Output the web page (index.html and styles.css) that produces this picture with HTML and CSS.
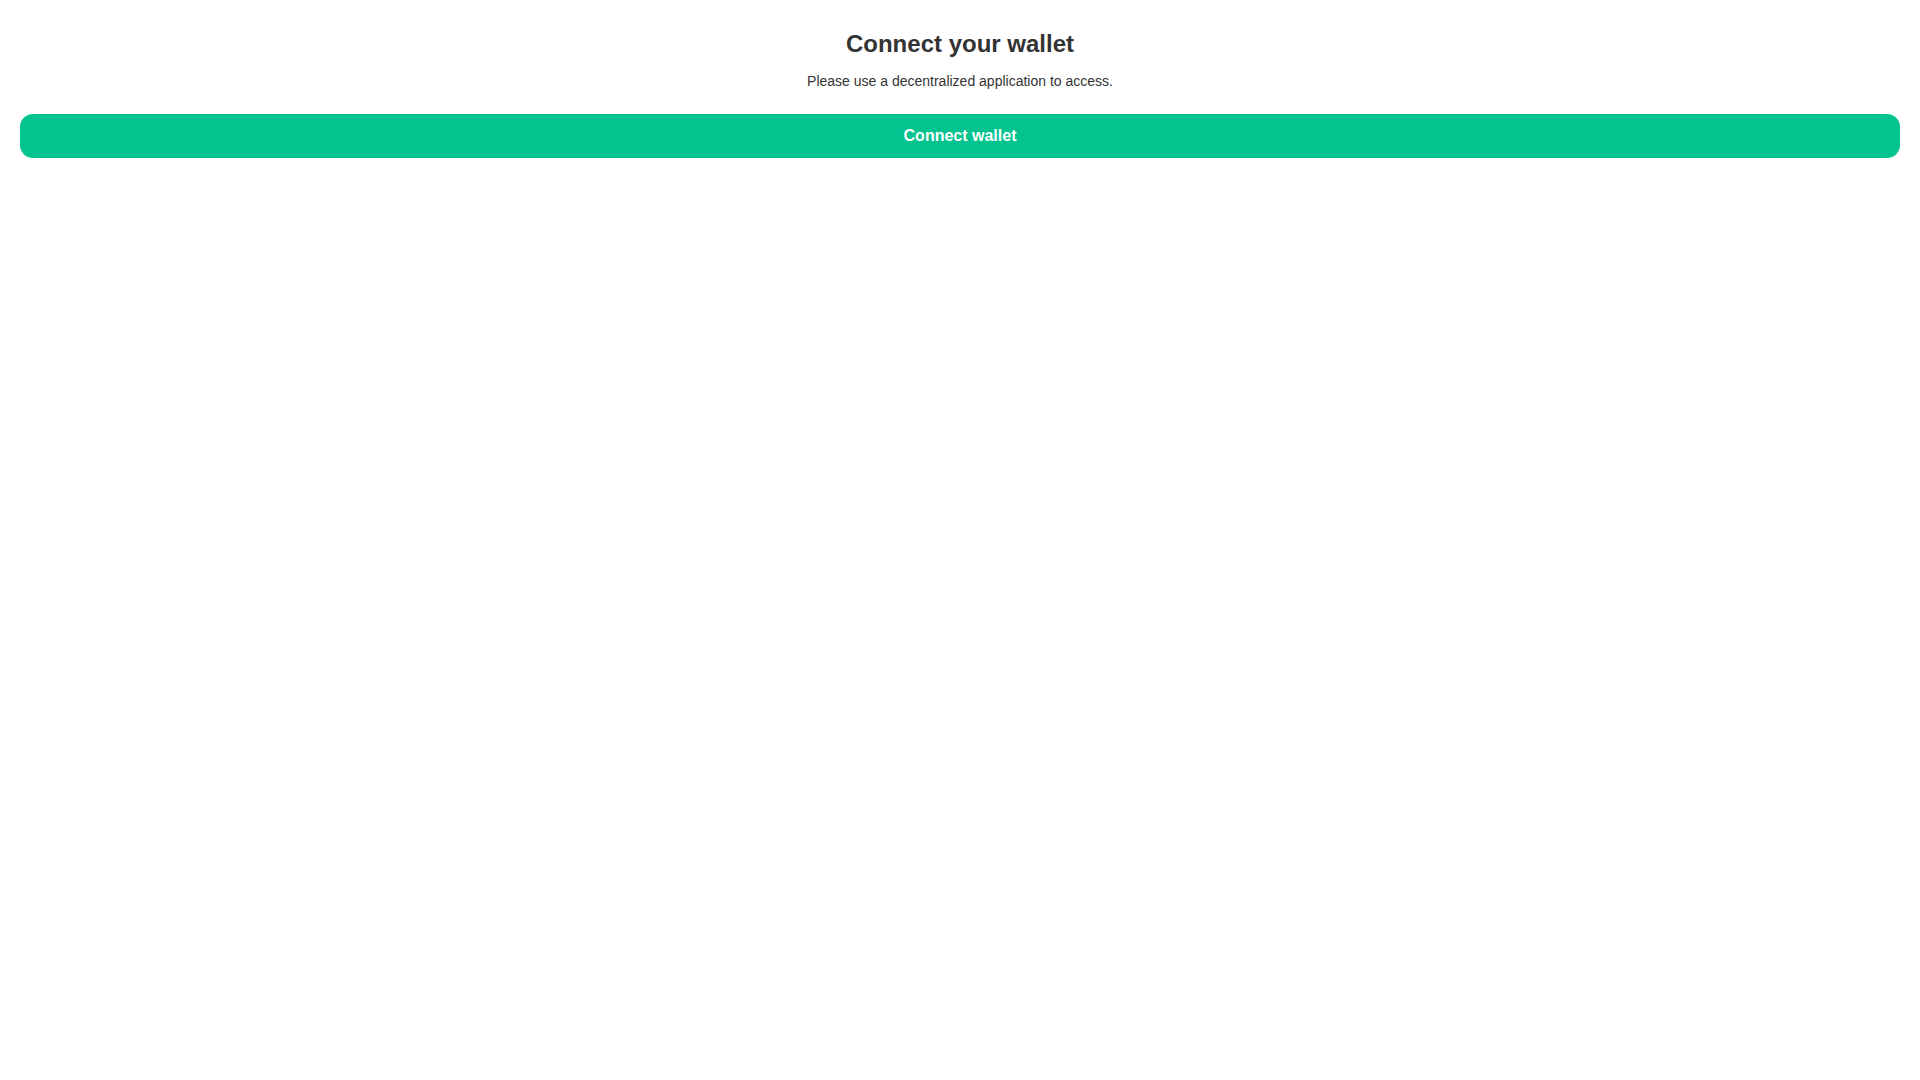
FILE: index.html
```
<!DOCTYPE html>
<html lang="en">
<head>
    <meta charset="UTF-8">
    <title>Connect your wallet</title>
    <meta name="viewport" content="width=device-width, initial-scale=1">
    <link rel="stylesheet" href="styles.css">
</head>
<body>
    <div class="container">
        <h1>Connect your wallet</h1>
        <p>Please use a decentralized application to access.</p>
        <button type="button" class="connect-btn">Connect wallet</button>
    </div>
</body>
</html>
```

FILE: styles.css
```
body {
    margin: 0;
    padding: 20px;
    font-family: "Liberation Sans", Arial, sans-serif;
    background-color: #fff;
    color: #333;
}

.container {
    text-align: center;
}

h1 {
    margin: 10px 0 12px;
    font-size: 24px;
    line-height: 28px;
}

p {
    margin: 0 0 22px;
    font-size: 14px;
    line-height: 22px;
}

.connect-btn {
    display: block;
    width: 100%;
    padding: 12px;
    border: none;
    border-radius: 13px;
    background-color: #03c38e;
    color: #fff;
    font-family: inherit;
    font-size: 16px;
    font-weight: bold;
    line-height: 20px;
    cursor: pointer;
}
```
